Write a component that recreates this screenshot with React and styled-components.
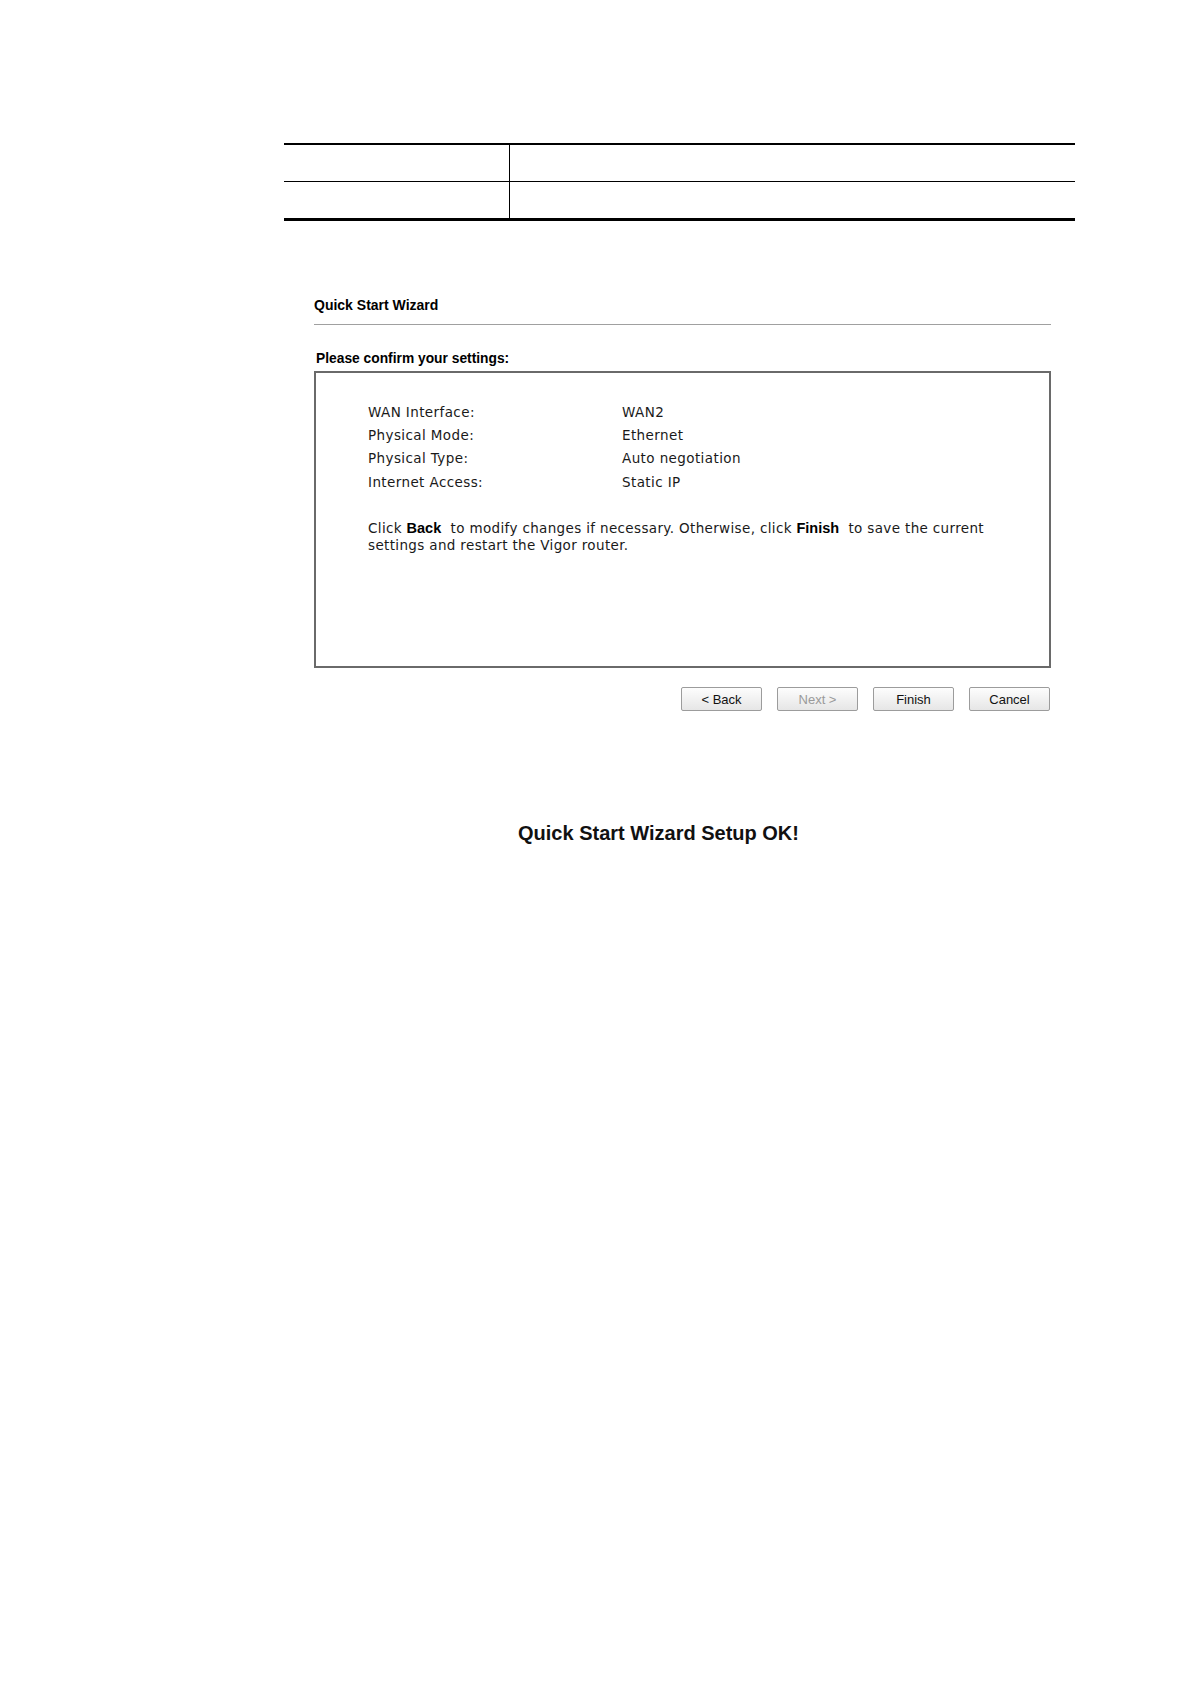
import React from "react";
import styled, { createGlobalStyle } from "styled-components";

const GlobalStyle = createGlobalStyle`
  html, body {
    margin: 0;
    padding: 0;
    background: #ffffff;
  }
  body {
    font-family: "Liberation Sans", Arial, sans-serif;
    color: #000;
  }
`;

const settings = [
  ["WAN Interface:", "WAN2"],
  ["Physical Mode:", "Ethernet"],
  ["Physical Type:", "Auto negotiation"],
  ["Internet Access:", "Static IP"],
];

const buttons = [
  { label: "< Back" },
  { label: "Next >", disabled: true },
  { label: "Finish" },
  { label: "Cancel" },
];

function App() {
  return (
    <Page>
      <GlobalStyle />
      <DocTable>
        <DocRow>
          <DocCell $first />
          <DocCell />
        </DocRow>
        <DocRow $last>
          <DocCell $first />
          <DocCell />
        </DocRow>
      </DocTable>

      <Wizard>
        <WizardTitle>Quick Start Wizard</WizardTitle>
        <Heading>Please confirm your settings:</Heading>
        <ConfirmBox>
          <SettingsList>
            {settings.map(([label, value]) => (
              <SettingRow key={label}>
                <span>{label}</span>
                <span>{value}</span>
              </SettingRow>
            ))}
          </SettingsList>
          <Note>
            Click <Strong>Back</Strong>&nbsp; to modify changes if necessary. Otherwise, click{" "}
            <Strong>Finish</Strong>&nbsp; to save the current
            <br />
            settings and restart the Vigor router.
          </Note>
        </ConfirmBox>
        <ButtonBar>
          {buttons.map((b) => (
            <Button key={b.label} disabled={b.disabled}>
              {b.label}
            </Button>
          ))}
        </ButtonBar>
      </Wizard>

      <SetupOk>Quick Start Wizard Setup OK!</SetupOk>
    </Page>
  );
}

const Page = styled.div`
  width: 1191px;
  height: 1684px;
  padding-top: 143px;
  box-sizing: border-box;
  background: #fff;
`;

const DocTable = styled.div`
  margin-left: 284px;
  width: 791px;
  border-top: 2px solid #000;
  border-bottom: 3px solid #000;
`;

const DocRow = styled.div`
  display: grid;
  grid-template-columns: 226px 1fr;
  height: 36px;
  border-bottom: ${(p) => (p.$last ? "none" : "1px solid #000")};
`;

const DocCell = styled.div`
  border-right: ${(p) => (p.$first ? "1px solid #000" : "none")};
`;

const Wizard = styled.div`
  margin-top: 76px;
  margin-left: 314px;
  width: 737px;
`;

const WizardTitle = styled.div`
  font-family: "Liberation Sans", Arial, sans-serif;
  font-weight: bold;
  font-size: 14px;
  line-height: 16px;
  padding-bottom: 11px;
  border-bottom: 1px solid #a0a0a0;
`;

const Heading = styled.div`
  margin-top: 26px;
  padding-left: 2px;
  font-weight: bold;
  font-size: 13.8px;
  line-height: 16px;
`;

const ConfirmBox = styled.div`
  margin-top: 4px;
  height: 297px;
  box-sizing: border-box;
  border: 2px solid #6a6a6a;
  padding: 27px 20px 0 52px;
`;

const SettingsList = styled.div`
  display: flex;
  flex-direction: column;
`;

const SettingRow = styled.div`
  display: grid;
  grid-template-columns: 254px 1fr;
  height: 23.4px;
  align-items: center;
  font-family: "DejaVu Sans", Verdana, sans-serif;
  font-size: 13.5px;
  letter-spacing: 0.4px;
  color: #1a1a1a;
`;

const Note = styled.p`
  margin: 26px 0 0;
  font-family: "DejaVu Sans", Verdana, sans-serif;
  font-size: 13.5px;
  letter-spacing: 0.35px;
  line-height: 17px;
  color: #1a1a1a;
`;

const Strong = styled.b`
  font-family: "Liberation Sans", Arial, sans-serif;
  font-size: 14.5px;
  letter-spacing: 0;
  color: #000;
`;

const ButtonBar = styled.div`
  display: flex;
  justify-content: flex-end;
  gap: 15px;
  margin-top: 19px;
  padding-right: 1px;
`;

const Button = styled.button`
  width: 81px;
  height: 24px;
  padding: 0;
  font-family: "Liberation Sans", Arial, sans-serif;
  font-size: 13px;
  color: ${(p) => (p.disabled ? "#9a9a9a" : "#111")};
  background: linear-gradient(#fdfdfd, #e6e6e6);
  border: 1px solid #9c9c9c;
  border-radius: 2px;
`;

const SetupOk = styled.div`
  margin-top: 110px;
  margin-left: 518px;
  font-family: "Liberation Sans", Arial, sans-serif;
  font-weight: bold;
  font-size: 20px;
  line-height: 24px;
  color: #111;
`;

export default App;
